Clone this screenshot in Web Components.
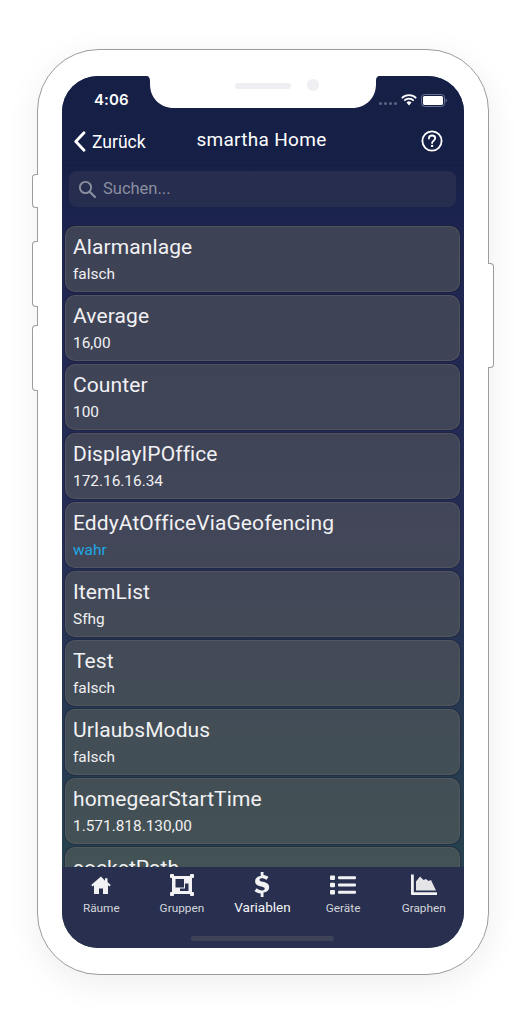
<!DOCTYPE html>
<html lang="de">
<head>
<meta charset="utf-8">
<title>smartha Home</title>
<style>
  html, body { margin: 0; background: #fff; }
  body { font-family: Roboto, "Liberation Sans", sans-serif; color: #fff; height: 1024px; overflow: hidden; }
</style>
</head>
<body>
<phone-frame>
  <status-bar></status-bar>
  <nav-bar back="Zurück" heading="smartha Home"></nav-bar>
  <search-box placeholder="Suchen..."></search-box>
  <var-list>
    <var-card name="Alarmanlage" value="falsch"></var-card>
    <var-card name="Average" value="16,00"></var-card>
    <var-card name="Counter" value="100"></var-card>
    <var-card name="DisplayIPOffice" value="172.16.16.34"></var-card>
    <var-card name="EddyAtOfficeViaGeofencing" value="wahr" on="true"></var-card>
    <var-card name="ItemList" value="Sfhg"></var-card>
    <var-card name="Test" value="falsch"></var-card>
    <var-card name="UrlaubsModus" value="falsch"></var-card>
    <var-card name="homegearStartTime" value="1.571.818.130,00"></var-card>
    <var-card name="socketPath" value=""></var-card>
  </var-list>
  <tab-bar>
    <tab-item label="Räume" icon="home"></tab-item>
    <tab-item label="Gruppen" icon="group"></tab-item>
    <tab-item label="Variablen" icon="dollar" active="true"></tab-item>
    <tab-item label="Geräte" icon="list"></tab-item>
    <tab-item label="Graphen" icon="chart"></tab-item>
  </tab-bar>
</phone-frame>

<script>
// Phone body, side buttons, notch and the screen that holds the slotted app
class PhoneFrame extends HTMLElement {
  constructor() {
    super();
    this.attachShadow({ mode: "open" });
  }
  connectedCallback() {
    this.shadowRoot.innerHTML = `
      <style>
        :host { display: block; position: relative; box-sizing: border-box; width: 452px; height: 926px; margin: 49px 0 0 37px; padding: 26px 24px; background: #fff; border: 1px solid #9c9c9f; border-radius: 62px; box-shadow: 0 8px 34px rgba(0,0,0,.07); }
        .btn { position: absolute; width: 6px; background: #fff; border: 1px solid #9c9c9f; box-sizing: border-box; }
        .left { left: -6px; border-right: 0; border-radius: 4px 0 0 4px; }
        .right { right: -6px; border-left: 0; border-radius: 0 4px 4px 0; }
        .screen { position: relative; width: 402px; height: 872px; border-radius: 36px; overflow: hidden; display: flex; flex-direction: column; background: linear-gradient(#162047 0, #162047 10%, #1f2650 20%, #252c56 50%, #27404f 88%, #27474f 100%); }
        .notch { position: absolute; top: 0; left: 84px; width: 234px; height: 32px; }
        .speaker { position: absolute; top: 7px; left: 89px; width: 56px; height: 6px; border-radius: 3px; background: #eeeef3; }
        .camera { position: absolute; top: 3px; left: 161px; width: 12px; height: 12px; border-radius: 50%; background: #eeeef3; }
      </style>
      <div class="btn left" style="top:124px;height:34px"></div>
      <div class="btn left" style="top:191px;height:66px"></div>
      <div class="btn left" style="top:275px;height:66px"></div>
      <div class="btn right" style="top:213px;height:105px"></div>
      <div class="screen">
        <slot></slot>
        <svg class="notch" viewBox="0 0 234 32"><path fill="#fff" d="M0 0H234C231 0 230 2 230 5V8C230 22 220 32 206 32H28C14 32 4 22 4 8V5C4 2 3 0 0 0Z"/></svg>
        <div class="notch"><div class="speaker"></div><div class="camera"></div></div>
      </div>`;
  }
}

class StatusBar extends HTMLElement {
  constructor() {
    super();
    this.attachShadow({ mode: "open" });
  }
  connectedCallback() {
    this.shadowRoot.innerHTML = `
      <style>
        :host { display: flex; flex: none; height: 46px; box-sizing: border-box; padding: 15px 17px 0 32px; align-items: flex-start; justify-content: space-between; background: #162047; }
        .time { font: 600 15px/18px Inter, Roboto, sans-serif; letter-spacing: .1px; }
        .icons { display: flex; align-items: center; gap: 4px; height: 18px; }
        .dots { display: flex; gap: 2px; margin-top: 7px; }
        .dots i { width: 3px; height: 3px; border-radius: 50%; background: #5c6380; }
      </style>
      <span class="time">4:06</span>
      <div class="icons">
        <div class="dots"><i></i><i></i><i></i><i></i></div>
        <svg width="16" height="12" viewBox="0 0 16 12"><g fill="none" stroke="#fff" stroke-width="1.7"><path d="M.8 4.2a10 10 0 0 1 14.4 0"/><path d="M3.3 6.6a6.5 6.5 0 0 1 9.4 0"/></g><path fill="#fff" d="M5.500 8.600a3.500 3.500 0 0 1 5 0L8 11.600z"/></svg>
        <svg width="26" height="13" viewBox="0 0 26 13"><rect x=".5" y=".5" width="23" height="12" rx="3" fill="none" stroke="#6a7190"/><rect x="2" y="2" width="20" height="9" rx="1.600" fill="#fff"/><path fill="#6a7190" d="M24.600 4.500c.8.2 1.200 1 1.200 2s-.4 1.800-1.200 2z"/></svg>
      </div>`;
  }
}

class NavBar extends HTMLElement {
  constructor() {
    super();
    this.attachShadow({ mode: "open" });
  }
  connectedCallback() {
    this.shadowRoot.innerHTML = `
      <style>
        :host { display: grid; grid-template-columns: 1fr auto 1fr; align-items: center; flex: none; height: 40px; padding: 0 21px 0 12px; background: #162047; border-bottom: 1px solid #1a2349; }
        .back { display: flex; align-items: center; gap: 6px; font: 400 17.500px/24px Roboto, sans-serif; }
        .back svg { margin-top: -2px; margin-left: -1px; }
        .title { font: 400 19px/24px Roboto, sans-serif; letter-spacing: .3px; margin: -4px 0 0 6px; }
        .help { justify-self: end; display: flex; margin-top: -2px; }
      </style>
      <div class="back">
        <svg width="13" height="21" viewBox="0 0 13 21"><path d="M11 1.800 2.800 10.500 11 19.200" fill="none" stroke="#fff" stroke-width="2.800" stroke-linecap="round" stroke-linejoin="round"/></svg>
        <span>${this.getAttribute("back")}</span>
      </div>
      <div class="title">${this.getAttribute("heading")}</div>
      <div class="help">
        <svg width="22" height="22" viewBox="0 0 22 22"><circle cx="11" cy="11" r="9.600" fill="none" stroke="#fff" stroke-width="1.800"/><path d="M7.900 8.500c0-1.800 1.400-3 3.200-3s3.100 1.100 3.100 2.800c0 2.400-3.100 2.400-3.100 4.700" fill="none" stroke="#fff" stroke-width="1.800" stroke-linecap="round"/><circle cx="11.100" cy="15.900" r="1.200" fill="#fff"/></svg>
      </div>`;
  }
}

class SearchBox extends HTMLElement {
  constructor() {
    super();
    this.attachShadow({ mode: "open" });
  }
  connectedCallback() {
    this.shadowRoot.innerHTML = `
      <style>
        :host { display: flex; align-items: center; gap: 6px; flex: none; box-sizing: border-box; height: 36px; margin: 8px 8px 0 7px; padding: 0 9px; border-radius: 8px; background: #262d4f; color: #8b8f9f; font: 400 16.500px/20px Roboto, sans-serif; }
      </style>
      <svg width="19" height="19" viewBox="0 0 19 19"><circle cx="7.500" cy="7.500" r="5.600" fill="none" stroke="#8b8f9f" stroke-width="1.900"/><path d="M11.700 11.700 17 17" stroke="#8b8f9f" stroke-width="2.200" stroke-linecap="round"/></svg>
      <span>${this.getAttribute("placeholder")}</span>`;
  }
}

class VarList extends HTMLElement {
  constructor() {
    super();
    this.attachShadow({ mode: "open" });
  }
  connectedCallback() {
    this.shadowRoot.innerHTML = `
      <style>
        :host { display: flex; flex-direction: column; gap: 3px; flex: 1; min-height: 0; overflow: hidden; padding: 19px 4px 0 3px; }
      </style>
      <slot></slot>`;
  }
}

class VarCard extends HTMLElement {
  constructor() {
    super();
    this.attachShadow({ mode: "open" });
  }
  connectedCallback() {
    const isOn = this.getAttribute("on") === "true";
    this.shadowRoot.innerHTML = `
      <style>
        :host { display: block; flex: none; box-sizing: border-box; height: 66px; padding: 7px 7px 0; border-radius: 10px; background: rgba(104,105,92,.43); border: 1px solid rgba(96,96,100,.55); box-shadow: 0 0 0 1px rgba(20,22,40,.3); }
        .name { font: 400 21px/26px Roboto, sans-serif; color: #f1f1f3; letter-spacing: .1px; }
        .value { font: 400 15.400px/20px Roboto, sans-serif; margin-top: 4px; color: ${isOn ? "#1ea7e4" : "#f1f1f3"}; }
      </style>
      <div class="name">${this.getAttribute("name")}</div>
      <div class="value">${this.getAttribute("value")}</div>`;
  }
}

class TabBar extends HTMLElement {
  constructor() {
    super();
    this.attachShadow({ mode: "open" });
  }
  connectedCallback() {
    this.shadowRoot.innerHTML = `
      <style>
        :host { display: block; position: relative; flex: none; height: 81px; background: #29304f; }
        .tabs { display: grid; grid-template-columns: repeat(5, 1fr); margin-left: -1px; }
        .home { position: absolute; left: 129px; bottom: 7px; width: 143px; height: 5px; border-radius: 3px; background: #3e4358; }
      </style>
      <div class="tabs"><slot></slot></div>
      <div class="home"></div>`;
  }
}

const TAB_ICONS = {
  home: `<svg width="22" height="20" viewBox="0 0 22 20"><path fill="#f2f2f4" d="M11 1.500 1.200 10l1.300 1.500L4 10.300V19h5v-5.500h4V19h5v-8.700l1.500 1.200 1.300-1.500-3.300-2.900V3.300h-2.500v2.400z"/></svg>`,
  group: `<svg width="26" height="24" viewBox="0 0 26 24"><path fill="#f2f2f4" fill-rule="evenodd" d="M3 3h20v18H3zM6.500 6v8.500H15V6zM16 10.500V15.500H11V18h8.500v-7.500z"/><g fill="#f2f2f4"><rect x="1" y="1" width="4" height="4" rx="1"/><rect x="21" y="1" width="4" height="4" rx="1"/><rect x="1" y="19" width="4" height="4" rx="1"/><rect x="21" y="19" width="4" height="4" rx="1"/></g></svg>`,
  dollar: `<svg width="16" height="25" viewBox="0 0 16 25"><path d="M6.700 0h2.800v3.100c2 .2 3.600.9 5 2l-2 2.700c-1.500-1-3-1.600-4.600-1.600-1.500 0-2.400.6-2.400 1.500 0 1 .8 1.500 3.300 2.100 3.700.9 6.400 2.100 6.400 5.500 0 2.900-2 4.800-5.700 5.300V25H6.700v-3.400c-2.400-.3-4.500-1.200-6.200-2.700l2.200-2.600c1.600 1.300 3.300 2.100 5.300 2.100 1.700 0 2.700-.7 2.700-1.700 0-1.100-.9-1.600-3.400-2.200-3.500-.8-6.200-2-6.200-5.300 0-2.800 2-4.700 5.600-5.100z" fill="#f2f2f4"/></svg>`,
  list: `<svg width="26" height="22" viewBox="0 0 26 22"><g fill="#f2f2f4"><rect x="0" y="1.500" width="5" height="4.500" rx="1"/><rect x="0" y="8.800" width="5" height="4.500" rx="1"/><rect x="0" y="16" width="5" height="4.500" rx="1"/><rect x="8" y="2.300" width="18" height="3" rx="1"/><rect x="8" y="9.500" width="18" height="3" rx="1"/><rect x="8" y="16.800" width="18" height="3" rx="1"/></g></svg>`,
  chart: `<svg width="26" height="22" viewBox="0 0 26 22"><path fill="#f2f2f4" d="M0 .5h2.800v17.700H26v2.800H1a1 1 0 0 1-1-1z"/><path fill="#e4e4e6" d="M5 16.500V7.500L9 2.500l3.500 3.500 2.500-1 2.500 2 2.500-1L25 16.500z"/></svg>`,
};

class TabItem extends HTMLElement {
  constructor() {
    super();
    this.attachShadow({ mode: "open" });
  }
  connectedCallback() {
    const isActive = this.getAttribute("active") === "true";
    this.shadowRoot.innerHTML = `
      <style>
        :host { display: flex; flex-direction: column; align-items: center; }
        .icon { display: flex; align-items: center; justify-content: center; height: 25px; margin-top: 5px; }
        .label { margin-top: ${isActive ? "2px" : "3px"}; font: 400 ${isActive ? "13.500px" : "11.800px"}/16px Roboto, sans-serif; color: ${isActive ? "#f5f5f7" : "#d3d4da"}; }
      </style>
      <div class="icon">${TAB_ICONS[this.getAttribute("icon")]}</div>
      <div class="label">${this.getAttribute("label")}</div>`;
  }
}

customElements.define("phone-frame", PhoneFrame);
customElements.define("status-bar", StatusBar);
customElements.define("nav-bar", NavBar);
customElements.define("search-box", SearchBox);
customElements.define("var-list", VarList);
customElements.define("var-card", VarCard);
customElements.define("tab-bar", TabBar);
customElements.define("tab-item", TabItem);
</script>
</body>
</html>
